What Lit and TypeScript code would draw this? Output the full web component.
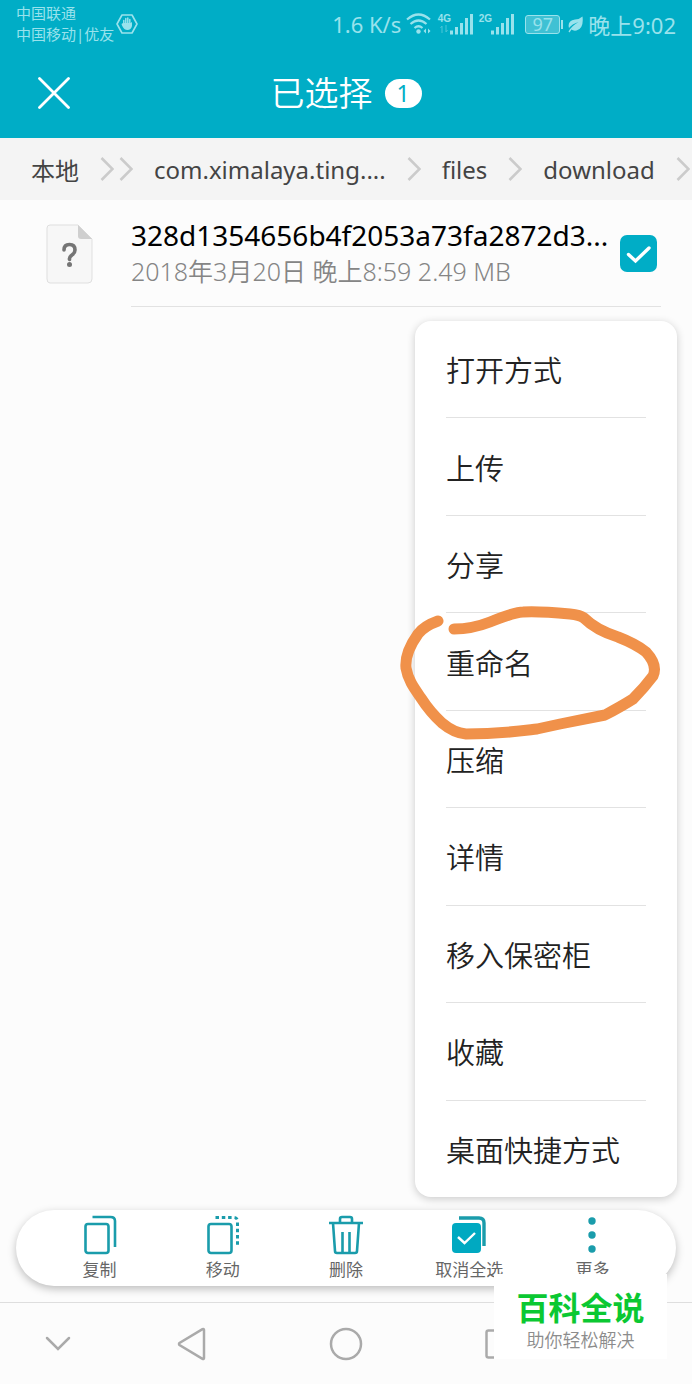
import { LitElement, html, css, svg } from "lit";
import { customElement, property } from "lit/decorators.js";

const chevron = html`<svg class="chev" width="14" height="26" viewBox="0 0 14 26" aria-hidden="true">
  <path d="M1.5 2 12.5 13 1.5 24" fill="none" stroke="#cbcbcb" stroke-width="2.6" />
</svg>`;

@customElement("status-bar")
export class StatusBar extends LitElement {
  static styles = css`
    :host {
      display: flex;
      justify-content: space-between;
      height: 48px;
      padding: 0 16px;
      color: #99e2ec;
      background: #00adc6;
    }
    .left,
    .right {
      display: flex;
      align-items: center;
    }
    .left {
      gap: 2px;
    }
    .carriers {
      font-size: 15px;
      line-height: 21px;
    }
    .right {
      font-size: 22px;
      gap: 5px;
    }
    .signal {
      display: flex;
      align-items: flex-start;
    }
    .net {
      display: flex;
      flex-direction: column;
      align-items: center;
      width: 12px;
      font: bold 10px/12px "Liberation Sans", Arial, sans-serif;
    }
    .signal + .signal {
      margin-right: 5px;
    }
    .battery {
      display: flex;
      align-items: center;
      gap: 1px;
    }
    .cell {
      box-sizing: border-box;
      width: 35px;
      height: 19px;
      border: 1px solid #99e2ec;
      border-radius: 3px;
      background: #3fc1d4;
      font-size: 18px;
      line-height: 17px;
      text-align: center;
    }
    .tip {
      width: 2px;
      height: 9px;
      background: #99e2ec;
    }
  `;

  private bars(label: string, arrows: boolean) {
    return html`<span class="signal">
      <span class="net">${label}
        ${arrows
          ? html`<svg width="8" height="8" viewBox="0 0 8 8"><path d="M2 8V1M.5 3 2 1M6 0V7M7.5 5 6 7" stroke="#4cc6d7" fill="none" /></svg>`
          : null}
      </span>
      <svg width="24" height="22" viewBox="0 0 24 22" fill="currentColor">
        <rect x="0" y="17.5" width="3" height="4" /><rect x="5" y="14" width="3" height="7.5" />
        <rect x="10" y="10" width="3" height="11.5" /><rect x="15" y="5" width="3" height="16.5" />
        <rect x="20" y="1" width="3" height="20.5" />
      </svg>
    </span>`;
  }

  render() {
    return html`
      <div class="left">
        <div class="carriers">中国联通<br />中国移动|优友</div>
        <svg width="22" height="22" viewBox="0 0 22 22" fill="none" stroke="currentColor" aria-hidden="true">
          <path d="M6 2h10l5 9-5 9H6L1 11z" stroke-width="1.6" stroke-linejoin="round" />
          <path d="M7.8 12V7.5M9.8 11V5.500M11.800 11V5M13.800 11V6.5" stroke-width="1.5" stroke-linecap="round" />
          <path d="M7 10h7.5l1.5-1v4q-1 4-4.5 4T6 12.5L5.5 11z" fill="currentColor" stroke="none" />
        </svg>
      </div>
      <div class="right">
        <span>1.6 K/s</span>
        <svg width="27" height="22" viewBox="0 0 27 22" fill="none" stroke="currentColor" stroke-width="2.2" aria-hidden="true">
          <path d="M1 6.5Q12.5-3.5 24 6.5M4.5 11q8-7 16 0M8.5 15q4-3.5 8 0" />
          <circle cx="12.5" cy="18.5" r="2.2" fill="currentColor" stroke="none" />
          <path d="M20 15.5l-2.5 2.5 2.5 2.5zM22 15.5l2.5 2.5-2.5 2.5z" fill="currentColor" stroke="none" />
        </svg>
        ${this.bars("4G", true)} ${this.bars("2G", false)}
        <span class="battery"><span class="cell">97</span><span class="tip"></span></span>
        <svg width="15" height="17" viewBox="0 0 15 17" aria-hidden="true">
          <path d="M14.5 .5Q16 13 8.5 14.5 5 15 3.500 13.500L1.500 16.500.5 15.500Q4 9.500 10.500 6 4 8 1 12-1 5 7 3.500 12 3 14.500.5z" fill="currentColor" />
        </svg>
        <span>晚上9:02</span>
      </div>
    `;
  }
}

const toolIcons = {
  copy: svg`<rect x="2.500" y="9" width="23" height="29" rx="2.5" /><path d="M9.500 2h18q4.500 0 4.500 4v26" />`,
  move: svg`<rect x="2.500" y="9" width="23" height="29" rx="2.5" /><path d="M9.500 2.500h18q4 0 4 4v26" stroke-width="3" stroke-dasharray="3.5 2.800" />`,
  remove: svg`<path d="M0 8h34M11 8V4q0-2 2-2h8q2 0 2 2v4M4 8l2 28q0 2 2 2h18q2 0 2-2l2-28M13.5 17v21M20.5 17v21" />`,
  deselect: svg`<rect x="0" y="8" width="29" height="30" rx="4" fill="#00a9c1" stroke="none" />
    <path d="M7 3h20q5 0 5 5v23" stroke-width="3.400" /><path d="M6 22l6.5 6L23 18" stroke="#fff" stroke-width="2.4" />`,
  more: svg`<g fill="#1a9cab" stroke="none"><circle cx="17" cy="6" r="3.7" /><circle cx="17" cy="20" r="3.7" /><circle cx="17" cy="34" r="3.7" /></g>`,
};

@customElement("tool-button")
export class ToolButton extends LitElement {
  @property() icon: keyof typeof toolIcons = "copy";
  @property() label = "";

  static styles = css`
    :host {
      display: block;
    }
    .tool {
      display: flex;
      flex-direction: column;
      align-items: center;
      gap: 3px;
      width: 100%;
      padding: 5px 0 0;
      border: 0;
      background: none;
      font: 17px/24px "Noto Sans", "Noto Sans CJK SC", sans-serif;
      color: #666;
      white-space: nowrap;
    }
  `;

  render() {
    return html`<button class="tool">
      <svg width="34" height="40" viewBox="0 0 34 40" fill="none" stroke="#1a9cab" stroke-width="2.6" aria-hidden="true">
        ${toolIcons[this.icon]}
      </svg>
      <span>${this.label}</span>
    </button>`;
  }
}

@customElement("app-root")
export class AppRoot extends LitElement {
  static styles = css`
    :host {
      display: flex;
      flex-direction: column;
      position: relative;
      min-height: 100vh;
      background: #fcfcfc;
      font-family: "Noto Sans", "Noto Sans CJK SC", sans-serif;
      color: #222;
    }
    button {
      border: 0;
      padding: 0;
      background: none;
      font: inherit;
      color: inherit;
    }
    svg {
      display: block;
      flex: none;
    }
    .titlebar {
      display: grid;
      grid-template-columns: 1fr auto 1fr;
      align-items: center;
      height: 90px;
      padding: 0 38px;
      background: #00adc6;
      color: #fff;
    }
    .title {
      display: flex;
      align-items: center;
      gap: 12px;
      margin: 0;
      font-size: 34px;
      line-height: 44px;
      font-weight: 350;
    }
    .count {
      width: 37px;
      height: 29px;
      border-radius: 15px;
      background: #fff;
      color: #00adc6;
      font-size: 23px;
      line-height: 29px;
      font-weight: 400;
      text-align: center;
    }
    .crumbs {
      display: flex;
      align-items: center;
      gap: 21px;
      height: 62px;
      padding-left: 31px;
      overflow: hidden;
      background: #f4f4f4;
      font-size: 24px;
      white-space: nowrap;
    }
    .crumbs a {
      color: #444;
      text-decoration: none;
    }
    .double {
      display: flex;
      gap: 5px;
    }
    .chev {
      flex: none;
    }
    .file {
      display: flex;
      align-items: stretch;
      padding: 0 31px 0 46px;
    }
    .doc {
      margin-top: 24px;
    }
    .body {
      display: flex;
      align-items: center;
      flex: 1;
      min-width: 0;
      height: 106px;
      margin-left: 38px;
      border-bottom: 1px solid #e2e2e2;
    }
    .info {
      flex: 1;
      min-width: 0;
      white-space: nowrap;
    }
    .name {
      font-size: 28px;
      line-height: 36px;
      color: #000;
    }
    .meta {
      font-size: 25px;
      line-height: 36px;
      font-weight: 350;
      color: #858585;
    }
    .check {
      display: grid;
      margin-right: 4px;
    }
    .check > * {
      grid-area: 1 / 1;
    }
    .check input {
      appearance: none;
      width: 37px;
      height: 37px;
      margin: 0;
      border-radius: 7px;
      background: #00adc6;
    }
    .check svg {
      pointer-events: none;
    }
    .stage {
      flex: 1;
      min-height: 600px;
      position: relative;
    }
    .menu {
      position: absolute;
      z-index: 1;
      top: 14px;
      right: 15px;
      bottom: 13px;
      display: flex;
      flex-direction: column;
      box-sizing: border-box;
      width: 262px;
      margin: 0;
      padding: 0 31px;
      list-style: none;
      border-radius: 16px;
      background: #fff;
      box-shadow: 0 2px 8px rgba(0, 0, 0, 0.2);
    }
    .item {
      position: relative;
      flex: 1;
      display: flex;
      border-bottom: 1px solid #e2e2e2;
    }
    .item:last-child {
      border-bottom: 0;
    }
    .item button {
      flex: 1;
      text-align: left;
      font-size: 29px;
      font-weight: 350;
    }
    .scribble {
      position: absolute;
      z-index: 1;
      left: -56px;
      top: -23px;
      pointer-events: none;
    }
    .toolbar {
      display: grid;
      grid-template-columns: repeat(5, 1fr);
      height: 76px;
      margin: 0 16px 16px;
      padding: 0 22px;
      border-radius: 38px;
      background: #fff;
      box-shadow: 0 3px 8px rgba(0, 0, 0, 0.25);
    }
    .nav {
      display: grid;
      grid-template-columns: 3fr 4fr 4fr 4fr 3fr;
      align-items: center;
      justify-items: center;
      height: 81px;
      border-top: 1px solid #dedede;
    }
    .brand {
      position: absolute;
      z-index: 2;
      right: 25px;
      bottom: 25px;
      box-sizing: border-box;
      width: 173px;
      height: 85px;
      padding-top: 14px;
      background: #fff;
      text-align: center;
      color: #8c8c8c;
      font-size: 18px;
      line-height: 24px;
      font-weight: 350;
    }
    .brand strong {
      display: block;
      font-size: 32px;
      line-height: 40px;
      font-weight: 700;
      color: #0bc832;
    }
  `;

  private items = ["打开方式", "上传", "分享", "重命名", "压缩", "详情", "移入保密柜", "收藏", "桌面快捷方式"];

  private scribble() {
    return html`<svg class="scribble" width="280" height="160" viewBox="0 0 280 160" aria-hidden="true">
      <path
        d="M48 31Q34 36 28 44C18 58 15 68 16 78C18 90 24 98 31 108Q40 122 52 133Q64 143 76 144C110 144 130 141 147 139L170 134L215 125Q232 116 243 109Q254 98 263 86Q268 75 256 62Q246 54 228 47Q206 40 194 28Q190 25 180 24Q148 21 133 22Q125 22 100 32Q82 39 64 39"
        fill="none" stroke="#f0914a" stroke-width="11" stroke-linecap="round" stroke-linejoin="round" />
    </svg>`;
  }

  render() {
    return html`
      <status-bar></status-bar>
      <header class="titlebar">
        <button aria-label="关闭">
          <svg width="32" height="32" viewBox="0 0 32 32"><path d="M1.5 1.5 30.5 30.5M30.5 1.5 1.5 30.5" stroke="#fff" stroke-width="2.8" stroke-linecap="round" /></svg>
        </button>
        <h1 class="title">已选择 <span class="count">1</span></h1>
      </header>
      <nav class="crumbs">
        <a href="#">本地</a>
        <span class="double">${chevron}${chevron}</span>
        <a href="#">com.ximalaya.ting....</a>
        ${chevron}
        <a href="#">files</a>
        ${chevron}
        <a href="#">download</a>
        ${chevron}
      </nav>
      <section class="file">
        <svg class="doc" width="47" height="60" viewBox="0 0 47 60" aria-hidden="true">
          <path d="M4 1h28l14 14v40q0 4-4 4H4q-3 0-3-4V4q0-3 3-3z" fill="#f7f7f7" stroke="#dfdfdf" />
          <path d="M32 1l14 14H35q-3 0-3-3z" fill="#cfcfcf" />
          <path d="M18 26q0-5.5 5.5-5.5T29 26q0 3-3 5t-2.5 4.5" fill="none" stroke="#757575" stroke-width="3.6" stroke-linecap="round" />
          <circle cx="23.5" cy="40.5" r="2.500" fill="#757575" />
        </svg>
        <div class="body">
          <label class="info" for="pick">
            <div class="name">328d1354656b4f2053a73fa2872d3...</div>
            <div class="meta">2018年3月20日 晚上8:59 2.49 MB</div>
          </label>
          <span class="check">
            <input id="pick" type="checkbox" checked />
            <svg width="37" height="37" viewBox="0 0 37 37"><path d="M8.5 19.5l7 6.500L29 13" fill="none" stroke="#fff" stroke-width="3.4" stroke-linecap="round" /></svg>
          </span>
        </div>
      </section>
      <main class="stage">
        <ul class="menu">
          ${this.items.map(
            (t) => html`<li class="item"><button>${t}</button>${t === "重命名" ? this.scribble() : null}</li>`
          )}
        </ul>
      </main>
      <div class="toolbar">
        <tool-button icon="copy" label="复制"></tool-button>
        <tool-button icon="move" label="移动"></tool-button>
        <tool-button icon="remove" label="删除"></tool-button>
        <tool-button icon="deselect" label="取消全选"></tool-button>
        <tool-button icon="more" label="更多"></tool-button>
      </div>
      <nav class="nav">
        <button aria-label="收起">
          <svg width="26" height="16" viewBox="0 0 26 16"><path d="M2 2l11 11L24 2" fill="none" stroke="#aaa" stroke-width="2.5" stroke-linecap="round" /></svg>
        </button>
        <button aria-label="返回">
          <svg width="30" height="34" viewBox="0 0 30 34"><path d="M27 3v28q0 1.500-1.500.8L2.500 18q-1-1 0-2L25.500 2.200Q27 1.500 27 3z" fill="none" stroke="#aaa" stroke-width="2.5" /></svg>
        </button>
        <button aria-label="主页">
          <svg width="34" height="34" viewBox="0 0 34 34"><circle cx="17" cy="17" r="15" fill="none" stroke="#aaa" stroke-width="2.5" /></svg>
        </button>
        <button aria-label="最近任务">
          <svg width="30" height="30" viewBox="0 0 30 30"><rect x="1.5" y="1.5" width="27" height="27" rx="2" fill="none" stroke="#aaa" stroke-width="2.5" /></svg>
        </button>
      </nav>
      <aside class="brand"><strong>百科全说</strong>助你轻松解决</aside>
    `;
  }
}
